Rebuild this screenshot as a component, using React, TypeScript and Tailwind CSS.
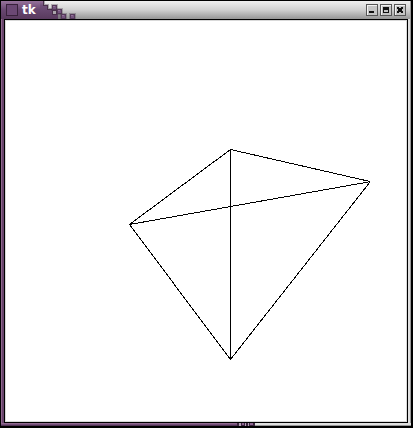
import React from "react";

const Block = ({ x, y }: { x: number; y: number }) => (
  <g>
    <rect x={x - 1} y={y - 1} width={7} height={7} fill="#3c2a3e" opacity="0.3" />
    <rect x={x} y={y} width={5} height={5} fill="#553a5a" />
    <rect x={x + 1} y={y + 1} width={3} height={3} fill="#75557f" />
    <rect x={x + 1} y={y + 1} width={2} height={1} fill="#94739a" />
  </g>
);

const TitleArt = () => (
  <svg width="38" height="18" viewBox="40 1 38 18" shapeRendering="crispEdges" className="shrink-0">
    <defs>
      <linearGradient id="plum" x1="0" y1="0" x2="0" y2="1">
        <stop offset="0" stopColor="#97739c" />
        <stop offset="0.25" stopColor="#70507a" />
        <stop offset="1" stopColor="#593a5e" />
      </linearGradient>
    </defs>
    <path d="M40 1h5v3h4v4h4v5h8v6H40z" fill="#3c2a3e" opacity="0.35" />
    <path d="M40 1h3v4h4v4h5v5h6v5H40z" fill="url(#plum)" />
    <path d="M43.5 1v4.500h4v4h4.500v4.500" fill="none" stroke="#49304b" />
    <Block x={52} y={5} />
    <Block x={57} y={9} />
    <Block x={61} y={14} />
    <Block x={70} y={14} />
    <rect x={52} y={10} width={5} height={5} fill="#49304b" />
    <rect x={53} y={11} width={3} height={3} fill="#aaa5aa" />
  </svg>
);

const WindowButton = ({ kind }: { kind: "min" | "max" | "close" }) => (
  <svg width="12" height="12" viewBox="0 0 12 12" shapeRendering="crispEdges">
    <rect width="12" height="12" fill="#555" />
    <rect x="1" y="1" width="10" height="10" fill="#f2f2f2" />
    <rect x="2" y="2" width="9" height="9" fill="#c5c5c5" />
    {kind === "min" && <rect x="3" y="7" width="5" height="2" fill="#111" />}
    {kind === "max" && <path d="M3 3h6v6H3zM4 6v2h4V6z" fill="#111" fillRule="evenodd" />}
    {kind === "close" && (
      <path d="M3 3h2v1h2V3h2v2H8v2h1v2H7V8H5v1H3V7h1V5H3z" fill="#111" />
    )}
  </svg>
);

const Wireframe = () => (
  <svg width="400" height="400" viewBox="6 21 400 400" shapeRendering="crispEdges" className="block">
    <path
      d="M129.5 224.5L230.5 149.5L370 181.500M230.5 149.5V359.5M129.5 224.5L370 181.700M129.5 224.5L230.5 359.5L370 182"
      fill="none"
      stroke="#000"
      strokeWidth="1"
    />
  </svg>
);

export default function App() {
  return (
    <div className="flex h-[428px] w-[413px] flex-col bg-black pt-px">
      <header className="ml-px flex h-[18px] w-[410px] border-r border-[#999999] bg-linear-to-b from-[#f0f0f0] via-[#d0d0d0] to-[#969696] pr-[4px]">
        <div className="flex h-[18px] w-[39px] shrink-0 bg-linear-to-b from-[#97739c] via-[#674670] to-[#593a5e] pt-[3px] pl-[5px]">
          <div className="h-[12px] w-[12px] shrink-0 border border-[#38213b] bg-[#6b4874]" />
          <span className="ml-[4px] pt-px text-[12px] leading-[11px] font-bold text-white [font-family:'DejaVu_Sans',sans-serif]">
            tk
          </span>
        </div>
        <TitleArt />
        <div className="ml-auto flex gap-[2px] pt-[3px]">
          <WindowButton kind="min" />
          <WindowButton kind="max" />
          <WindowButton kind="close" />
        </div>
      </header>
      <div className="flex h-[404px]">
        <div className="ml-px flex w-[3px]">
          <div className="w-px bg-[#90688f]" />
          <div className="w-[2px] bg-[#69446c]" />
        </div>
        <main className="h-[404px] w-[404px] border border-black bg-white">
          <div className="h-[402px] w-[402px] border border-[#d9d9d9]">
            <Wireframe />
          </div>
        </main>
        <div className="flex w-[3px]">
          <div className="w-[2px] bg-[#e0e0e0]" />
          <div className="w-px bg-[#999999]" />
        </div>
      </div>
      <footer className="ml-px flex h-[3px] w-[410px]">
        <div className="w-[236px] border-t border-b border-t-[#90688f] border-b-[#543657] bg-[#75507a]" />
        <svg width="18" height="3" shapeRendering="crispEdges">
          <rect width="18" height="3" fill="#3c253f" />
          <path d="M2 0h2v3H2zM8 0h1v3H8zM11 0h1v3h-1z" fill="#b49fb5" />
          <path d="M5 0h2v2H5zM13 0h3v2h-3z" fill="#8e6592" />
        </svg>
        <div className="flex-1 border-b border-[#999999] bg-[#e0e0e0]" />
      </footer>
    </div>
  );
}
